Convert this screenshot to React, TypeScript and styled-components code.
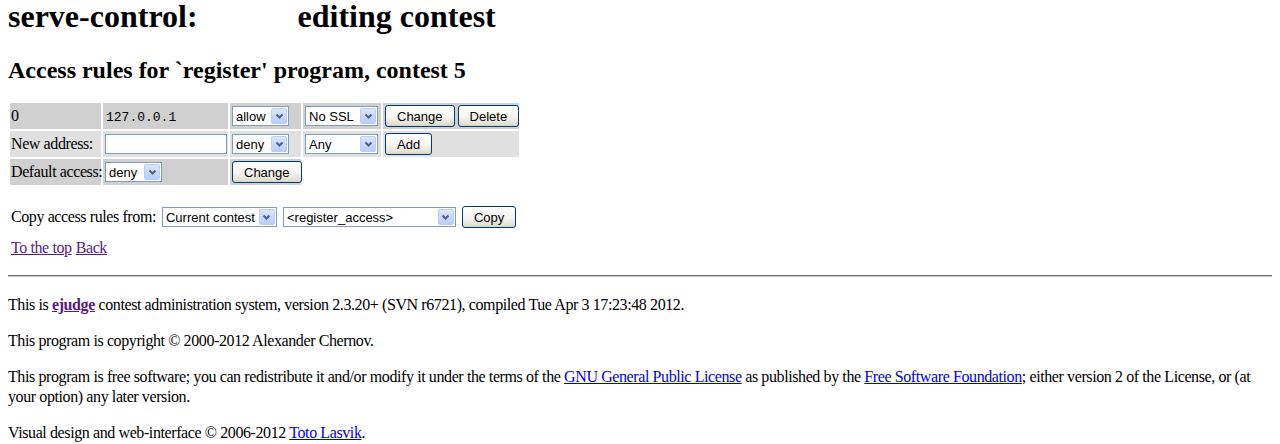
import React from 'react';
import styled, { createGlobalStyle } from 'styled-components';

const GlobalStyle = createGlobalStyle`
  body {
    margin: 0 8px;
    font-family: "Liberation Serif", "Times New Roman", serif;
    font-size: 16px;
    letter-spacing: -0.4px;
    color: #000;
    background: #fff;
  }
`;

const Title = styled.h1`
  margin: 0;
  font-size: 32px;
  line-height: 32px;
  font-weight: bold;
  letter-spacing: normal;
  white-space: nowrap;
`;

const TitleRest = styled.span`
  margin-left: 100px;
`;

const SubTitle = styled.h2`
  margin: 24px 0 17px;
  font-size: 24px;
  line-height: 28px;
  font-weight: bold;
  letter-spacing: normal;
`;

const RulesTable = styled.table`
  table-layout: fixed;
  width: 513px;
  border-spacing: 2px;
  border-collapse: separate;
  margin: 0;
`;

const Cell = styled.td<{ $alt?: boolean; $w?: number }>`
  box-sizing: border-box;
  width: ${({ $w }) => ($w ? `${$w}px` : 'auto')};
  height: 26px;
  padding: 2px 1px;
  background: ${({ $alt }) => ($alt ? '#e0e0e0' : '#d0d0d0')};
  vertical-align: middle;
  white-space: nowrap;
  overflow: visible;
  font-size: 16px;
`;

const Mono = styled.span`
  padding-left: 2px;
  font-family: "Liberation Mono", "Courier New", monospace;
  font-size: 13px;
  letter-spacing: normal;
`;

const SelectBox = styled.span<{ $w: number }>`
  display: inline-flex;
  align-items: center;
  box-sizing: border-box;
  width: ${({ $w }) => $w}px;
  height: 20px;
  margin-left: 1px;
  padding: 1px;
  border: 1px solid #7f9db9;
  background: #fff;
  vertical-align: middle;
  letter-spacing: normal;
  cursor: default;
`;

const SelectText = styled.span`
  flex: 1;
  padding-left: 2px;
  font-family: "Liberation Sans", Arial, sans-serif;
  font-size: 13px;
  white-space: nowrap;
  overflow: hidden;
`;

const Arrow = styled.span`
  display: flex;
  align-items: center;
  justify-content: center;
  box-sizing: border-box;
  width: 16px;
  height: 16px;
  border: 1px solid #b9cdf6;
  border-radius: 2px;
  background: linear-gradient(#dbe6fe, #b9cdfa);
`;

const TextInput = styled.input`
  box-sizing: border-box;
  width: 122px;
  height: 20px;
  margin: 0 0 0 1px;
  padding: 1px 2px;
  border: 1px solid #7f9db9;
  font-family: "Liberation Sans", Arial, sans-serif;
  font-size: 13px;
  vertical-align: middle;
`;

const Button = styled.button`
  box-sizing: border-box;
  height: 22px;
  margin: 0 0 0 1px;
  padding: 0 11px;
  border: 1px solid #003c74;
  border-radius: 3px;
  background: linear-gradient(#ffffff 0%, #f5f4ef 55%, #e3e0d5 90%, #d6d0c5 100%);
  color: #000;
  font-family: "Liberation Sans", Arial, sans-serif;
  font-size: 13px;
  letter-spacing: normal;
  vertical-align: middle;
`;

const Buttons = styled.span`
  display: inline-flex;
  gap: 2px;
`;

const CopyRow = styled.form`
  display: flex;
  align-items: center;
  gap: 5px;
  height: 26px;
  margin: 17px 0 0;
  padding-left: 3px;
`;

const Links = styled.div`
  margin-top: 8px;
  padding-left: 3px;
  line-height: 20px;
  display: flex;
  gap: 4px;
`;

const Link = styled.a<{ $visited?: boolean }>`
  color: ${({ $visited }) => ($visited ? '#551a8b' : '#0000ee')};
  text-decoration: underline;
`;

const Rule = styled.hr`
  margin: 17px 0 18px;
  height: 0;
  border: 0;
  border-top: 1px solid #6e6e6e;
  border-bottom: 1px solid #c6c6c6;
`;

const Para = styled.p`
  margin: 16px 0;
  line-height: 20px;

  &:last-child {
    margin-bottom: 0;
  }
`;

const Chevron = () => (
  <svg width="9" height="7" viewBox="0 0 9 7">
    <polyline points="1.5,1.5 4.5,4.5 7.5,1.5" fill="none" stroke="#4d6185" strokeWidth="2" />
  </svg>
);

const Select = ({ value, width }: { value: string; width: number }) => (
  <SelectBox $w={width} role="combobox">
    <SelectText>{value}</SelectText>
    <Arrow>
      <Chevron />
    </Arrow>
  </SelectBox>
);

const App = () => (
  <>
    <GlobalStyle />
    <Title>
      serve-control:<TitleRest>editing contest</TitleRest>
    </Title>
    <SubTitle>Access rules for `register' program, contest 5</SubTitle>

    <RulesTable>
      <tbody>
        <tr>
          <Cell $w={91}>0</Cell>
          <Cell $w={125}>
            <Mono>127.0.0.1</Mono>
          </Cell>
          <Cell $w={71}>
            <Select value="allow" width={57} />
          </Cell>
          <Cell $w={78}>
            <Select value="No SSL" width={73} />
          </Cell>
          <Cell $w={136}>
            <Buttons>
              <Button type="button">Change</Button>
              <Button type="button">Delete</Button>
            </Buttons>
          </Cell>
        </tr>
        <tr>
          <Cell $alt>New address:</Cell>
          <Cell $alt>
            <TextInput />
          </Cell>
          <Cell $alt>
            <Select value="deny" width={57} />
          </Cell>
          <Cell $alt>
            <Select value="Any" width={73} />
          </Cell>
          <Cell $alt>
            <Button type="button">Add</Button>
          </Cell>
        </tr>
        <tr>
          <Cell>Default access:</Cell>
          <Cell>
            <Select value="deny" width={57} />
          </Cell>
          <Cell>
            <Button type="button">Change</Button>
          </Cell>
        </tr>
      </tbody>
    </RulesTable>

    <CopyRow>
      <span>Copy access rules from:</span>
      <Select value="Current contest" width={115} />
      <Select value="<register_access>" width={173} />
      <Button type="button">Copy</Button>
    </CopyRow>

    <Links>
      <Link href="#" $visited>To the top</Link>
      <Link href="#" $visited>Back</Link>
    </Links>

    <Rule />

    <div>
      <Para>
        This is{' '}
        <Link href="#" $visited>
          <b>ejudge</b>
        </Link>{' '}
        contest administration system, version 2.3.20+ (SVN r6721), compiled Tue Apr 3 17:23:48 2012.
      </Para>
      <Para>This program is copyright © 2000-2012 Alexander Chernov.</Para>
      <Para>
        This program is free software; you can redistribute it and/or modify it under the terms of the{' '}
        <Link href="#">GNU General Public License</Link> as published by the{' '}
        <Link href="#">Free Software Foundation</Link>; either version 2 of the License, or (at
        <br />
        your option) any later version.
      </Para>
      <Para>
        Visual design and web-interface © 2006-2012 <Link href="#">Toto Lasvik</Link>.
      </Para>
    </div>
  </>
);

export default App;
